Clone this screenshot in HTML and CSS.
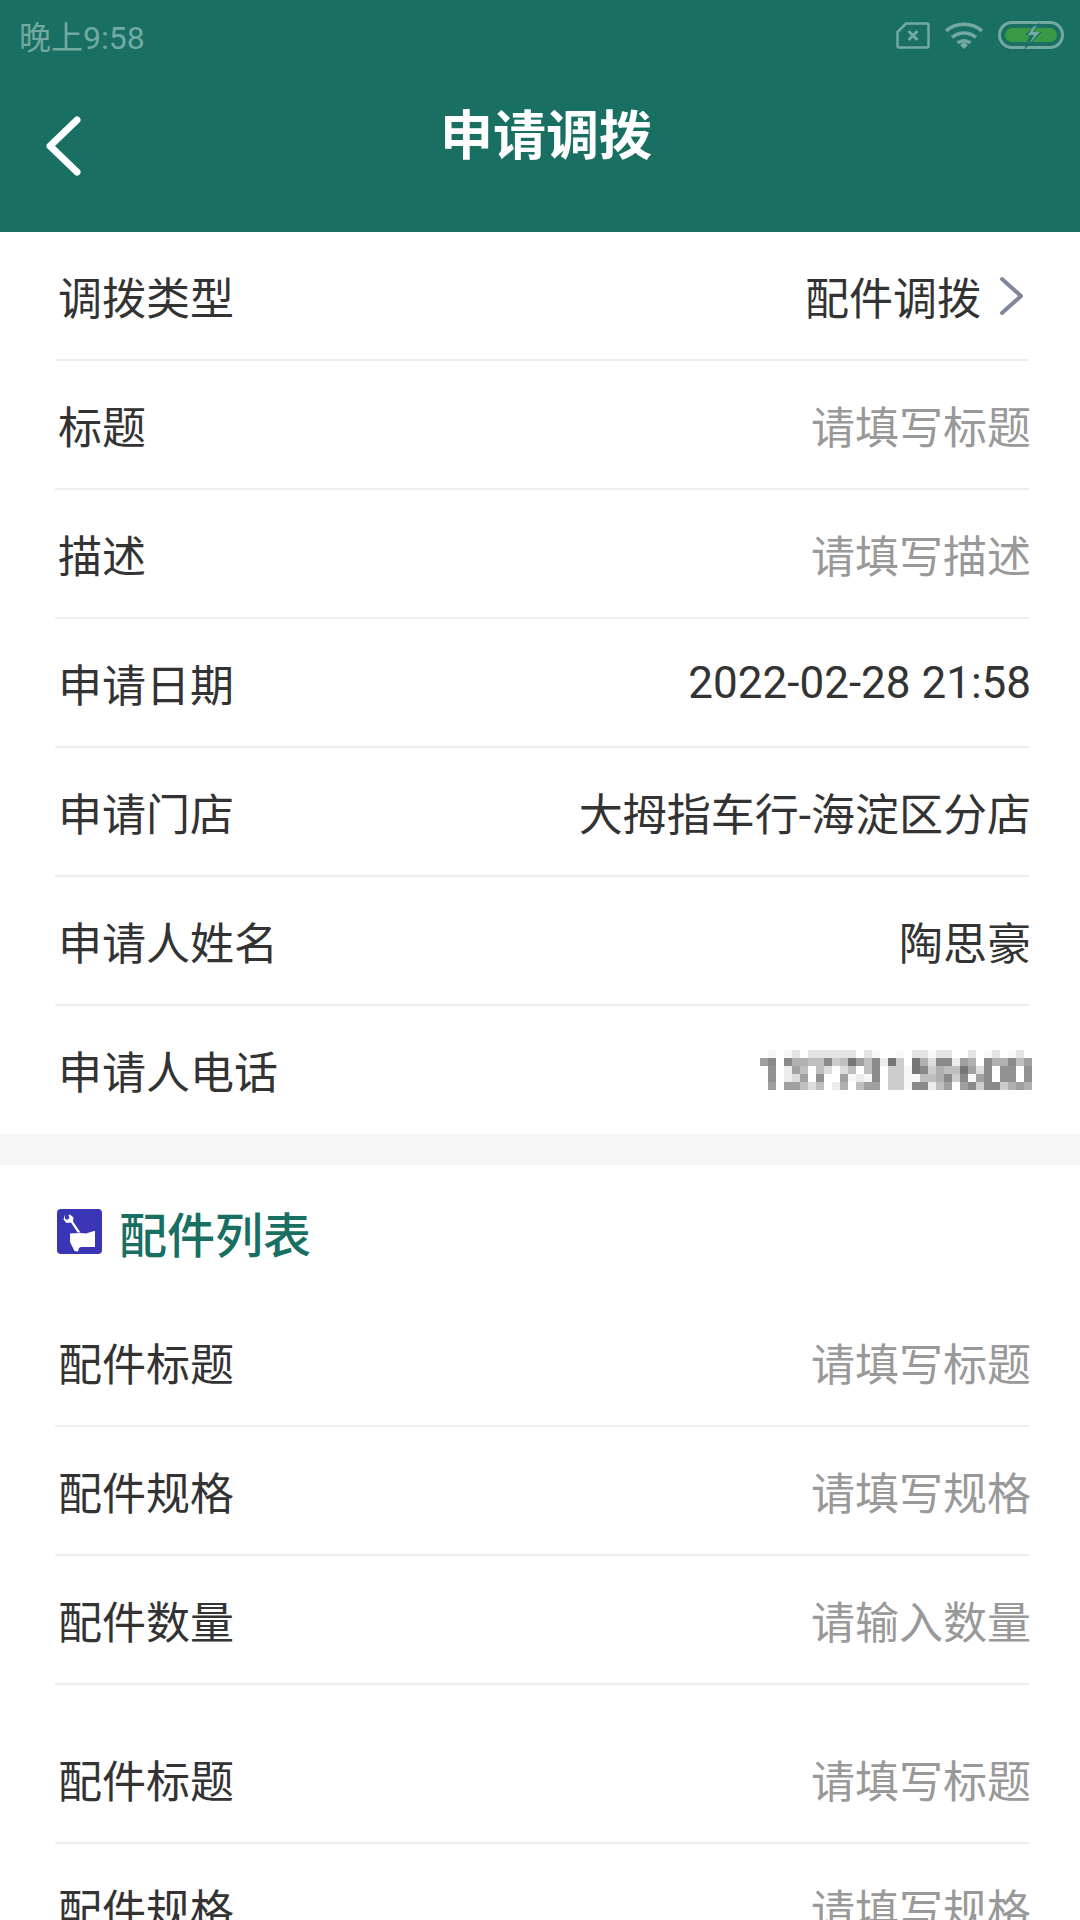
FILE: index.html
```html
<!DOCTYPE html>
<html>
<head>
	<meta charset="UTF-8">
	<title>申请调拨</title>
	<link rel="stylesheet" href="styles.css">
</head>
<body>
	<div class="header">
		<div class="status">
			<span class="time">晚上9:58</span>
			<div class="status-icons">
				<svg width="34" height="27" viewBox="0 0 34 27"><path d="M10 1.5H31a1.5 1.5 0 0 1 1.500 1.500V24a1.500 1.500 0 0 1-1.500 1.500H3a1.500 1.500 0 0 1-1.500-1.500V10z" fill="none" stroke="#74a9a1" stroke-width="2.500"/><path d="M12.500 9l9 9M21.500 9l-9 9" stroke="#74a9a1" stroke-width="3"/></svg>
				<svg width="40" height="28" viewBox="0 0 40 28"><path d="M2 10C12 1 28 1 38 10M8 16.500C15 10.500 25 10.500 32 16.500M13.500 22C17 19 23 19 26.500 22" fill="none" stroke="#74a9a1" stroke-width="3.600"/><path d="M16 24l4-3 4 3-4 4z" fill="#74a9a1"/></svg>
				<svg width="66" height="30" viewBox="0 0 66 30"><rect x="1.500" y="2.500" width="63" height="25" rx="12.500" fill="none" stroke="#74a9a1" stroke-width="3"/><rect x="7" y="8" width="52" height="14" rx="7" fill="#389a45"/><path d="M27 15l15-13-6 10h8L26 30l6-15z" fill="#186f62"/><path d="M35 7l-5 8h6l-5 9 11-12h-7l4-7z" fill="#74a9a1"/></svg>
			</div>
		</div>
		<div class="titlebar">
			<svg class="back" width="38" height="60" viewBox="0 0 38 60"><path d="M33 4L6 30l27 26" fill="none" stroke="#fff" stroke-width="7" stroke-linecap="round" stroke-linejoin="round"/></svg>
			<h1 class="title">申请调拨</h1>
		</div>
	</div>

	<div class="group">
		<div class="row">
			<span>调拨类型</span>
			<span class="val val-arrow">配件调拨
				<svg width="24" height="40" viewBox="0 0 24 40"><path d="M3 3l19 17L3 37" fill="none" stroke="#80869c" stroke-width="4" stroke-linecap="round" stroke-linejoin="round"/></svg>
			</span>
		</div>
		<div class="row"><span>标题</span><span class="hint">请填写标题</span></div>
		<div class="row"><span>描述</span><span class="hint">请填写描述</span></div>
		<div class="row"><span>申请日期</span><span class="val">2022-02-28 21:58</span></div>
		<div class="row"><span>申请门店</span><span class="val">大拇指车行-海淀区分店</span></div>
		<div class="row"><span>申请人姓名</span><span class="val">陶思豪</span></div>
		<div class="row row-last">
			<span>申请人电话</span>
			<svg class="mosaic" width="272" height="40" viewBox="0 0 34 5" shape-rendering="crispEdges" aria-label="电话已打码">
				<path fill="#f6f6f6" d="M1 0h1v1H1zM3 0h1v1H3z"/>
				<path fill="#e4e4e4" d="M4 0h1v1H4zM6 0h2v1H6zM8 0h2v1H8zM10 0h2v1h-2zM13 0h1v1h-1zM19 0h2v1h-2zM22 0h2v1h-2zM26 0h1v1h-1zM29 0h1v1h-1zM32 0h1v1h-1z"/>
				<path fill="#f9f9f9" d="M14 0h1v1h-1zM17 0h1v1h-1zM21 0h1v1h-1zM28 0h1v1h-1zM31 0h1v1h-1z"/>
				<path fill="#a0a0a0" d="M0 1h1v1H0zM1 4h1v1H1zM12 1h1v1h-1zM25 1h1v1h-1zM33 1h1v1h-1zM3 4h2v1H3zM13 4h2v1h-2zM23 4h1v1h-1zM25 4h1v1h-1zM32 4h1v1h-1zM4 2h1v1H4zM26 2h1v1h-1zM5 3h1v1H5zM10 3h1v1h-1zM27 3h1v1h-1z"/>
				<path fill="#8a8a8a" d="M1 1h1v1H1zM3 1h1v1H3zM8 1h1v1H8zM14 1h1v1h-1zM22 1h2v1h-2zM28 1h1v1h-1zM31 1h1v1h-1zM14 2h1v1h-1zM20 2h1v1h-1zM28 2h1v1h-1zM14 3h1v1h-1zM23 3h1v1h-1zM25 3h1v1h-1zM28 3h1v1h-1zM19 4h2v1h-2zM26 4h1v1h-1zM28 4h2v1h-2z"/>
				<path fill="#919191" d="M1 2h1v1H1zM30 2h2v1h-2zM33 2h1v1h-1zM1 3h1v1H1zM7 3h1v1H7zM30 3h2v1h-2zM33 3h1v1h-1z"/>
				<path fill="#b0b0b0" d="M4 1h2v1H4zM20 1h1v1h-1zM26 1h1v1h-1zM29 1h2v1h-2zM22 2h1v1h-1zM22 3h1v1h-1zM10 4h1v1h-1zM31 4h1v1h-1zM33 4h1v1h-1z"/>
				<path fill="#bfbfbf" d="M6 1h2v1H6zM10 1h1v1h-1zM13 1h1v1h-1zM32 1h1v1h-1zM5 2h1v1H5zM7 2h1v1H7zM11 2h1v1h-1zM13 2h1v1h-1zM23 2h2v1h-2zM20 3h2v1h-2zM5 4h1v1H5zM7 4h1v1H7zM12 4h1v1h-1zM22 4h1v1h-1z"/>
				<path fill="#cdcdcd" d="M9 1h1v1H9zM17 1h1v1h-1zM16 2h2v1h-2zM21 2h1v1h-1zM16 3h2v1h-2zM24 3h1v1h-1zM16 4h2v1h-2zM27 4h1v1h-1zM30 4h1v1h-1z"/>
				<path fill="#dcdcdc" d="M21 1h1v1h-1zM8 2h1v1H8zM10 2h1v1h-1zM27 2h1v1h-1zM4 3h1v1H4zM6 4h1v1H6z"/>
				<path fill="#ececec" d="M15 1h1v1h-1zM24 1h1v1h-1zM3 2h1v1H3zM3 3h1v1H3zM12 3h1v1h-1zM9 4h1v1H9zM21 4h1v1h-1z"/>
				<path fill="#f7f7f7" d="M18 2h1v1h-1zM11 3h1v1h-1zM13 3h1v1h-1zM18 3h2v1h-2zM26 3h1v1h-1zM18 4h1v1h-1z"/>
				<path fill="#767676" d="M11 1h1v1h-1zM16 1h1v1h-1zM19 1h1v1h-1zM19 2h1v1h-1zM25 2h1v1h-1z"/>
			</svg>
		</div>
	</div>

	<div class="gap"></div>

	<div class="section-head">
		<svg width="45" height="45" viewBox="0 0 45 45">
			<rect width="45" height="45" rx="4" fill="#3a35b5"/>
			<path d="M8 5.500l-1.500 5 3 3.500 4.500-.5 6.500 10h3L16 12.500l.5-4-3.500-3-1.500.5 1 3-2.500 2-2-1.500z" fill="#fff"/>
			<path d="M13 24.500l11-.5 5 .5 8-2.500 1 0V38H32l-8 0-2 1-1 3.500-3.500-.5-2-4-2.500-5z" fill="#fff"/>
		</svg>
		<h2 class="section-title">配件列表</h2>
	</div>

	<div class="group">
		<div class="row"><span>配件标题</span><span class="hint">请填写标题</span></div>
		<div class="row"><span>配件规格</span><span class="hint">请填写规格</span></div>
		<div class="row"><span>配件数量</span><span class="hint">请输入数量</span></div>
	</div>
	<div class="group group-next">
		<div class="row"><span>配件标题</span><span class="hint">请填写标题</span></div>
		<div class="row"><span>配件规格</span><span class="hint">请填写规格</span></div>
	</div>
</body>
</html>
```

FILE: styles.css
```css
*{
	box-sizing:border-box;
}

html,body{
	margin:0;
	height:1920px;
	overflow:hidden;
	background:#fff;
}

body{
	font-family:"Roboto","Noto Sans CJK SC",sans-serif;
	font-size:44px;
	color:#333;
}

.header{
	height:232px;
	background:#186f62;
}

.status{
	height:70px;
	padding:0 16px 0 19px;
	display:flex;
	justify-content:space-between;
	align-items:center;
}

.time{
	font-size:32px;
	color:#74a9a1;
}

.status-icons{
	display:flex;
	align-items:center;
	gap:14px;
}

.titlebar{
	height:162px;
	padding-left:44px;
	display:flex;
	align-items:center;
	position:relative;
}

.back{
	margin-top:-10px;
}

.title{
	position:absolute;
	left:440px;
	top:32px;
	margin:0;
	font-size:53px;
	font-weight:bold;
	line-height:70px;
	color:#fff;
}

.row{
	height:129px;
	margin:0 51px 0 55px;
	border-bottom:2px solid #eee;
	display:flex;
	justify-content:space-between;
	align-items:center;
}

.row span:first-child{
	margin-left:3px;
}

.row-last{
	border-bottom:0;
	height:128px;
}

.val,.hint{
	margin-right:-2px;
}

.hint{
	color:#999;
}

.val-arrow{
	display:flex;
	align-items:center;
	gap:18px;
	margin-right:6px;
}

.mosaic{
	margin-right:-3px;
}

.gap{
	height:31px;
	background:#f6f6f6;
}

.section-head{
	height:133px;
	padding-left:57px;
	display:flex;
	align-items:center;
	gap:17px;
}

.section-title{
	margin:0;
	font-size:48px;
	font-weight:500;
	color:#186f62;
}

.group-next{
	margin-top:30px;
}
```
